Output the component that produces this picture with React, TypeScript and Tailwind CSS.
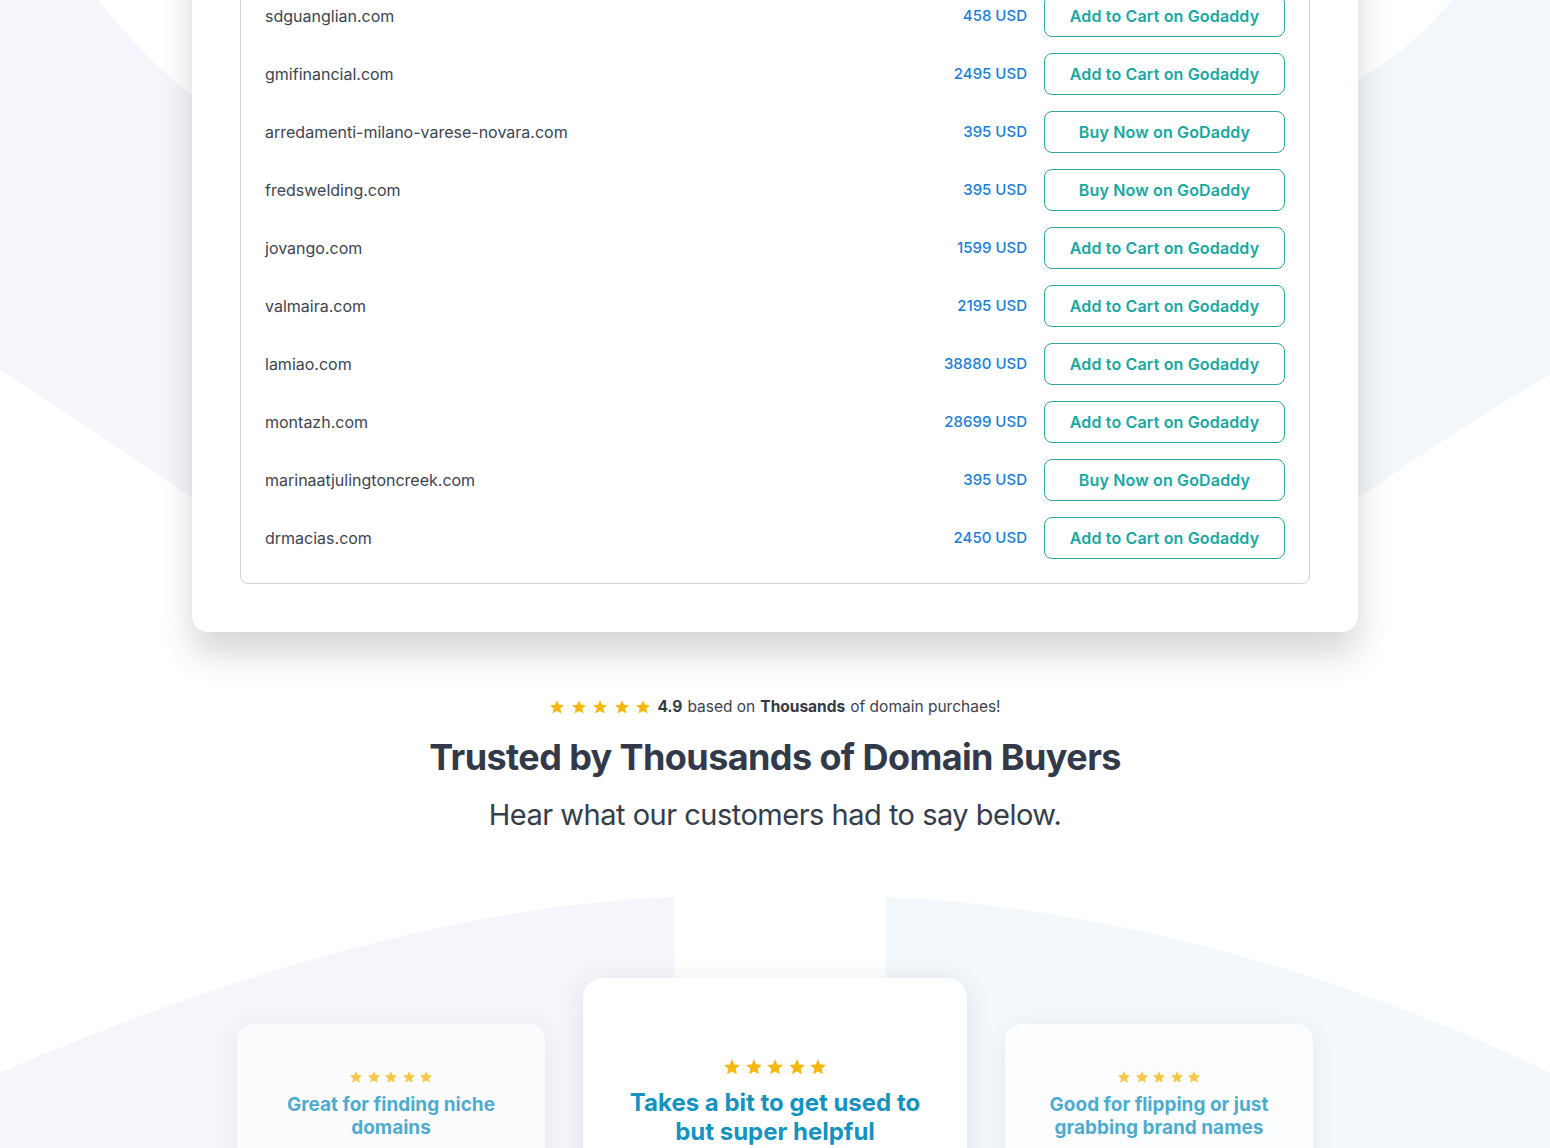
import React from 'react';

const DOMAINS = [
  { name: 'sdguanglian.com', price: '458 USD', cta: 'Add to Cart on Godaddy' },
  { name: 'gmifinancial.com', price: '2495 USD', cta: 'Add to Cart on Godaddy' },
  { name: 'arredamenti-milano-varese-novara.com', price: '395 USD', cta: 'Buy Now on GoDaddy' },
  { name: 'fredswelding.com', price: '395 USD', cta: 'Buy Now on GoDaddy' },
  { name: 'jovango.com', price: '1599 USD', cta: 'Add to Cart on Godaddy' },
  { name: 'valmaira.com', price: '2195 USD', cta: 'Add to Cart on Godaddy' },
  { name: 'lamiao.com', price: '38880 USD', cta: 'Add to Cart on Godaddy' },
  { name: 'montazh.com', price: '28699 USD', cta: 'Add to Cart on Godaddy' },
  { name: 'marinaatjulingtoncreek.com', price: '395 USD', cta: 'Buy Now on GoDaddy' },
  { name: 'drmacias.com', price: '2450 USD', cta: 'Add to Cart on Godaddy' },
];

function Star({ size, color = '#f6b80f' }: { size: number; color?: string }) {
  return (
    <svg width={size} height={size} viewBox="0 0 24 24" className="shrink-0">
      <path
        fill={color}
        d="M12 1.8l3.1 6.9 7.4.7-5.6 5 1.7 7.4L12 17.9l-6.6 3.9 1.7-7.4-5.6-5 7.4-.7z"
      />
    </svg>
  );
}

function Stars({ size, gap }: { size: number; gap: string }) {
  return (
    <div className={`flex items-center justify-center ${gap}`}>
      {[0, 1, 2, 3, 4].map(i => (
        <Star key={i} size={size} />
      ))}
    </div>
  );
}

function Backdrop() {
  return (
    <svg className="pointer-events-none absolute inset-0" width="1550" height="1148" viewBox="0 0 1550 1148">
      <path fill="#f5f6fb" d="M0 0 L98 0 C130 40 170 85 240 130 L240 530 C150 470 80 420 0 370 Z" />
      <path fill="#f1f7fa" d="M1452 0 C1420 40 1380 70 1310 110 L1310 530 C1400 470 1470 420 1550 375 L1550 0 Z" />
      <path fill="#f5f6fb" d="M0 1073 C200 985 450 905 674 897 L674 1148 L0 1148 Z" />
      <path fill="#f2f8fb" d="M886 897 C1100 905 1350 975 1550 1073 L1550 1148 L886 1148 Z" />
    </svg>
  );
}

function DomainRow({ name, price, cta }: { name: string; price: string; cta: string }) {
  return (
    <div className="flex h-[58px] items-center">
      <div className="flex-1 text-[16px] text-[#3d4451]">{name}</div>
      <div className="mr-[17px] text-[15px] font-medium text-[#1b7ed6]">{price}</div>
      <button className="flex h-[42px] w-[241px] items-center justify-center rounded-lg border border-[#2aa7a0] bg-white text-[16px] font-semibold tracking-[0.01em] text-[#18a89f]">
        {cta}
      </button>
    </div>
  );
}

function SideReview({ title }: { title: string }) {
  return (
    <div className="mt-[46px] h-[200px] w-[308px] rounded-2xl bg-white px-[26px] pt-[45px] opacity-75 shadow-[0_4px_24px_rgba(30,40,80,0.08)]">
      <div className="flex h-[16px] items-center justify-center">
        <Stars size={14} gap="gap-[3.5px]" />
      </div>
      <div className="mt-[8px] text-center text-[19px] font-bold leading-[23px] text-[#1593c0]">{title}</div>
    </div>
  );
}

export default function App() {
  return (
    <div className="relative h-[1148px] w-full overflow-hidden bg-white font-['Inter',sans-serif]">
      <Backdrop />
      <div className="relative">
        <div className="mx-auto -mt-[72px] w-[1166px] rounded-2xl bg-white p-12 shadow-[0_22px_34px_rgba(0,0,0,0.16)]">
          <div className="rounded-lg border border-[#d3d3d3] px-6 pb-4 pt-[10px]">
            {DOMAINS.map(d => (
              <DomainRow key={d.name} {...d} />
            ))}
          </div>
        </div>

        <div className="mt-[63px] flex items-center justify-center text-[15.5px] leading-6 text-[#3c4250]">
          <Stars size={16} gap="gap-[5.5px]" />
          <span className="ml-[6px] font-bold text-[#343a46]">4.9</span>
          <span className="ml-[5px]">based on</span>
          <span className="ml-[5px] font-bold text-[#343a46]">Thousands</span>
          <span className="ml-[5px]">of domain purchaes!</span>
        </div>

        <h2 className="mt-4 text-center text-[36px] font-bold leading-[44px] tracking-[-0.6px] text-[#323a4a]">
          Trusted by Thousands of Domain Buyers
        </h2>
        <p className="mt-[18px] text-center text-[29px] leading-9 tracking-[-0.5px] text-[#363d4a]">
          Hear what our customers had to say below.
        </p>

        <div className="mt-[145px] flex items-start justify-center gap-[38px]">
          <SideReview title="Great for finding niche domains" />
          <div className="h-[260px] w-[384px] rounded-[20px] bg-white px-8 pt-[78px] shadow-[0_4px_28px_rgba(30,40,80,0.10)]">
            <div className="flex h-[22px] items-center justify-center">
              <Stars size={18} gap="gap-[3.5px]" />
            </div>
            <div className="mt-[10px] text-center text-[24px] font-bold leading-[29px] text-[#1593c0]">
              Takes a bit to get used to but super helpful
            </div>
          </div>
          <SideReview title="Good for flipping or just grabbing brand names" />
        </div>
      </div>
    </div>
  );
}
